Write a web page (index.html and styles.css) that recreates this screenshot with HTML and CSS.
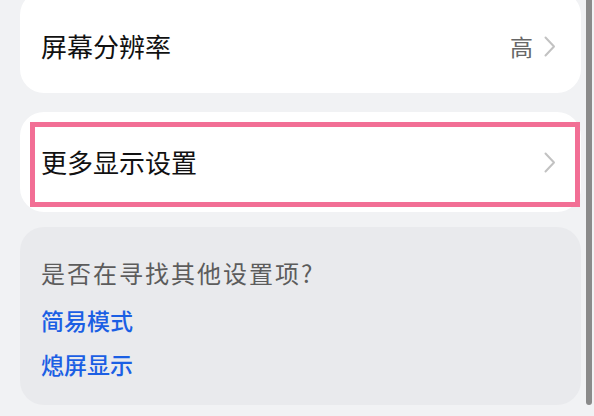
FILE: index.html
```html
<!DOCTYPE html>
<html lang="zh-CN">
<head>
<meta charset="utf-8">
<link rel="stylesheet" href="styles.css">
</head>
<body>
<div class="screen">
  <div class="page">
    <div class="card row first">
      <span class="title">屏幕分辨率</span>
      <span class="right"><span class="value">高</span>
        <svg class="chev" width="12" height="21" viewBox="0 0 12 21"><path d="M1.5 1.5 L10 10.5 L1.5 19.5" fill="none" stroke="#c2c2c2" stroke-width="2" stroke-linecap="round" stroke-linejoin="round"/></svg>
      </span>
    </div>
    <div class="card row second">
      <span class="title">更多显示设置</span>
      <span class="right">
        <svg class="chev" width="12" height="21" viewBox="0 0 12 21"><path d="M1.5 1.5 L10 10.5 L1.5 19.5" fill="none" stroke="#c2c2c2" stroke-width="2" stroke-linecap="round" stroke-linejoin="round"/></svg>
      </span>
      <div class="highlight"></div>
    </div>
    <div class="card hint">
      <div class="question">是否在寻找其他设置项?</div>
      <div class="link first-link">简易模式</div>
      <div class="link">熄屏显示</div>
    </div>
  </div>
  <div class="scrollbar"></div>
</div>
</body>
</html>
```
FILE: styles.css
```css
html, body {
  margin: 0;
  padding: 0;
  background: #f1f2f4;
  overflow: hidden;
}
body {
  width: 594px;
  height: 416px;
  font-family: "Noto Sans CJK SC", "Noto Sans", sans-serif;
}
.screen {
  display: flex;
  align-items: flex-start;
  height: 416px;
  padding-left: 20px;
  box-sizing: border-box;
}
.page {
  width: 561px;
  flex: none;
  display: flex;
  flex-direction: column;
}
.card {
  background: #ffffff;
  border-radius: 24px;
  box-sizing: border-box;
}
.row {
  display: flex;
  align-items: center;
  justify-content: space-between;
  padding: 0 25px 0 21px;
  height: 100px;
  flex: none;
  position: relative;
}
.first {
  margin-top: -9px;
  height: 102px;
}
.second {
  margin-top: 19px;
}
.title {
  font-size: 26px;
  color: #111111;
  line-height: 36px;
  font-weight: 400;
}
.first .title {
  position: relative;
  top: 4px;
}
.right {
  display: flex;
  align-items: center;
  gap: 11px;
}
.first .right {
  position: relative;
  top: 4px;
}
.value {
  font-size: 23px;
  color: #676767;
  line-height: 30px;
}
.chev {
  display: block;
}
.highlight {
  position: absolute;
  left: 10px;
  top: 10px;
  right: 1px;
  bottom: 5px;
  border: 5px solid #f26f95;
}
.hint {
  flex: none;
  margin-top: 15px;
  background: #e9eaed;
  padding: 28px 21px 19px;
  height: 178px;
}
.question {
  font-size: 24px;
  line-height: 36px;
  color: #5c5c5c;
  letter-spacing: 2px;
}
.link {
  font-size: 23px;
  line-height: 44px;
  color: #1b5fe4;
  font-weight: 500;
}
.first-link {
  margin-top: 7px;
}
.scrollbar {
  flex: none;
  margin-left: 5px;
  width: 6px;
  height: 405px;
  border-radius: 0 0 3px 3px;
  background: #8a8a8a;
}
```
